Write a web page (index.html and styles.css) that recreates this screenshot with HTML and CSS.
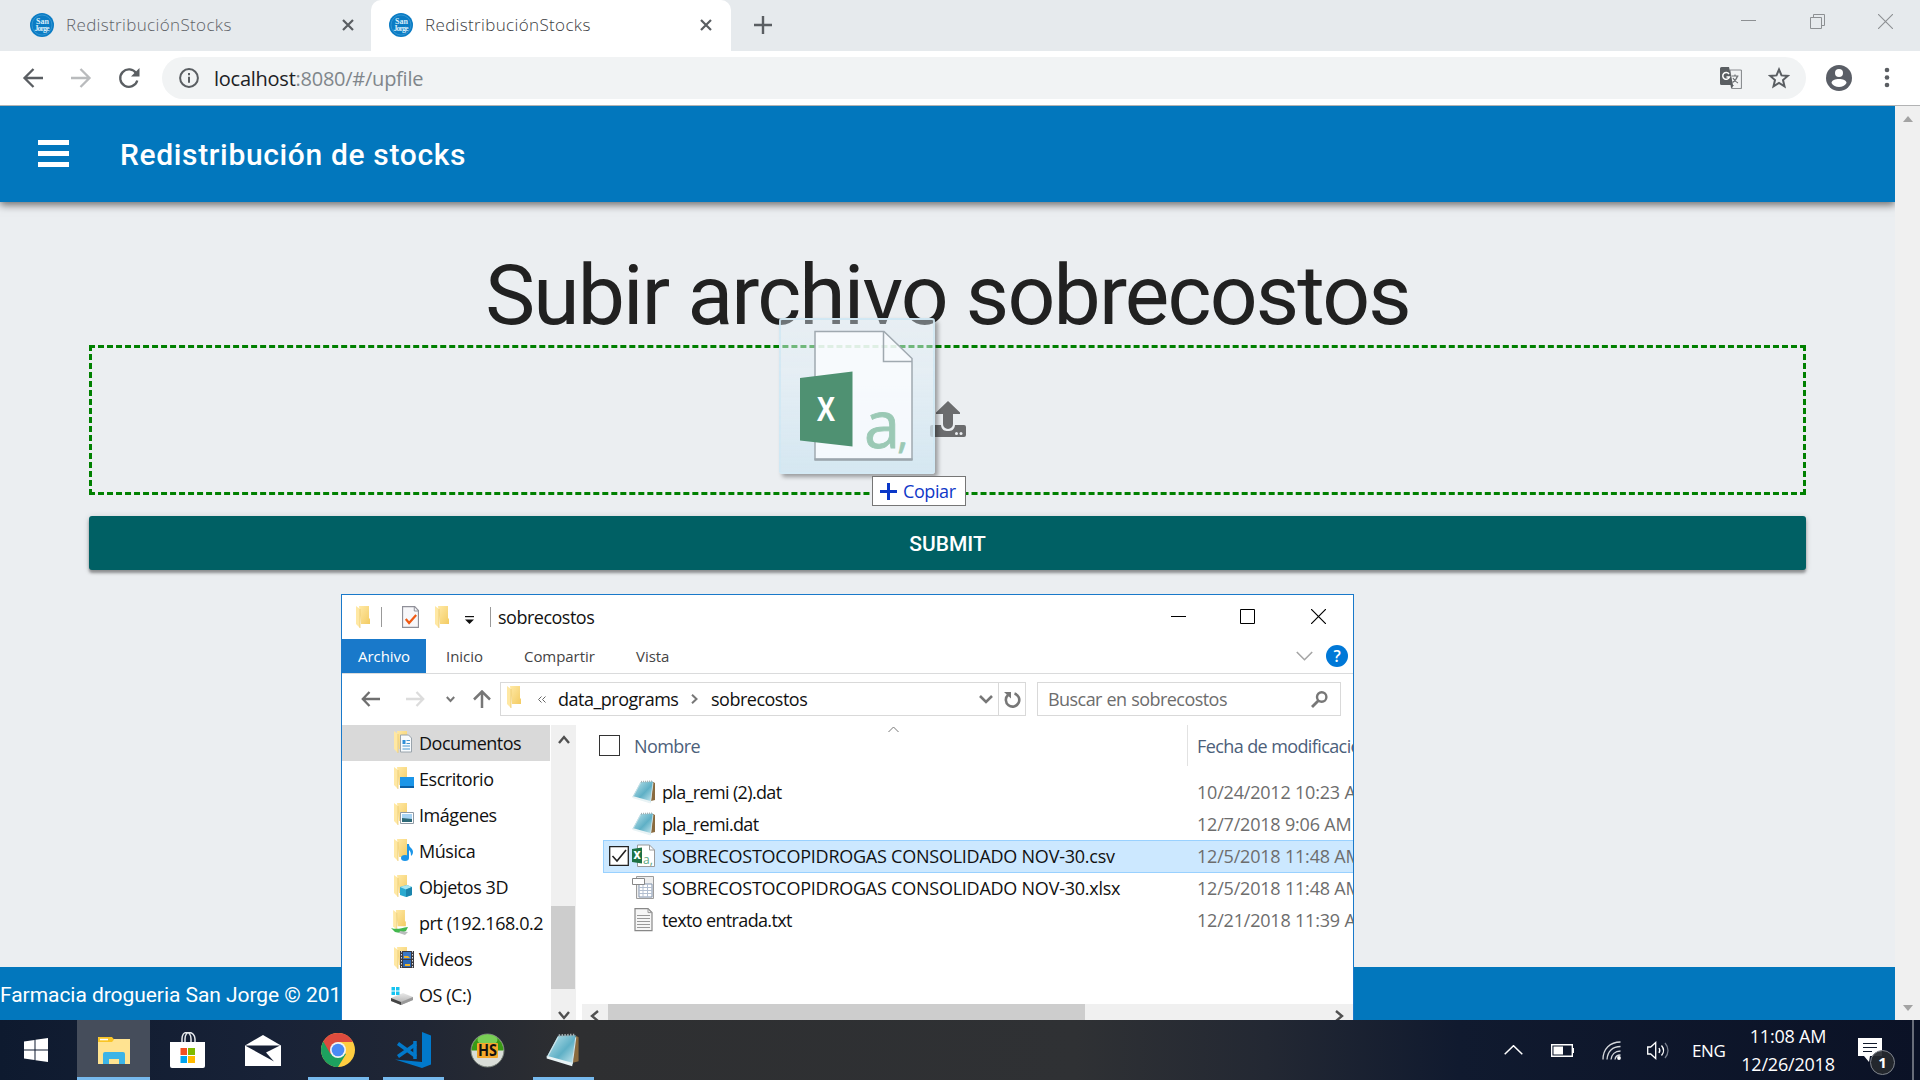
FILE: index.html
```html
<!DOCTYPE html>
<html lang="es">
<head>
<meta charset="utf-8">
<title>RedistribuciónStocks</title>
<link rel="stylesheet" href="styles.css">
</head>
<body>
<svg class="defs" width="0" height="0">
  <defs>
    <linearGradient id="gold" x1="0" y1="0" x2="1" y2="1"><stop offset="0" stop-color="#ffe9a6"/><stop offset="1" stop-color="#f3cb62"/></linearGradient>
    <linearGradient id="pad" x1="0" y1="0" x2="1" y2="1"><stop offset="0" stop-color="#c4e8ef"/><stop offset=".55" stop-color="#5fb0c6"/><stop offset="1" stop-color="#d5eef3"/></linearGradient>
    <linearGradient id="drive" x1="0" y1="0" x2="0" y2="1"><stop offset="0" stop-color="#e9e9e9"/><stop offset="1" stop-color="#a9a9a9"/></linearGradient>
    <symbol id="folder" viewBox="0 0 14 22"><path d="M3 0h10v12l1 1v5H5z" fill="url(#gold)"/><path d="M0 0l4 3v19l-4-4z" fill="#ffe8a3"/><path d="M4 3v19" stroke="#e6c469" stroke-width=".7"/></symbol>
    <symbol id="notepad" viewBox="0 0 24 24"><path d="M21 2l2 1v17l-4 1z" fill="#8a6a3e"/><path d="M8.500 2L21 1.500 18.500 23 .500 17z" fill="url(#pad)"/><path d="M.500 16l18 5v2.500L.500 18z" fill="#e9f3f5"/><path d="M9 1.800l12-.5" stroke="#a5b2b5" stroke-width="1.800" stroke-dasharray="1 1"/><path d="M8.500 3L1 17M21 3l-2.500 19" stroke="#cfe3e8" stroke-width=".8"/></symbol>
    <symbol id="logo" viewBox="0 0 24 24"><circle cx="12" cy="12" r="12" fill="#0b7cc4"/><circle cx="12" cy="12" r="10" fill="none" stroke="#3b9bd6" stroke-width=".8"/><text x="12.500" y="11" font-size="8" font-weight="700" text-anchor="middle" fill="#d8edf9" font-family="Liberation Serif, serif">San</text><text x="12" y="17.500" font-size="8" font-weight="700" text-anchor="middle" textLength="15" fill="#d8edf9" font-family="Liberation Serif, serif">Jorge</text></symbol>
    <symbol id="cross" viewBox="0 0 12 12"><path d="M1 1l10 10M11 1L1 11" stroke="#5a5e62" stroke-width="2.200"/></symbol>
  </defs>
</svg>

<header class="tabstrip">
  <div class="tab">
    <svg class="fav"><use href="#logo"/></svg><span class="tab-title">RedistribuciónStocks</span><svg class="tab-x"><use href="#cross"/></svg>
  </div>
  <div class="tab active">
    <svg class="fav"><use href="#logo"/></svg><span class="tab-title">RedistribuciónStocks</span><svg class="tab-x"><use href="#cross"/></svg>
  </div>
  <svg class="newtab" viewBox="0 0 18 18"><path d="M9 0v18M0 9h18" stroke="#5a5e62" stroke-width="2.400"/></svg>
  <div class="win-controls">
    <svg width="15" height="15" viewBox="0 0 15 15"><path d="M0 6.500h15" stroke="#8d9093"/></svg>
    <svg width="15" height="15" viewBox="0 0 15 15"><path d="M.5 3.500h11v11H.5zM3.500 3.500v-3h11v11h-3" fill="none" stroke="#8d9093"/></svg>
    <svg width="15" height="15" viewBox="0 0 15 15"><path d="M0 0l15 15M15 0L0 15" stroke="#8d9093" stroke-width="1.100"/></svg>
  </div>
</header>

<nav class="toolbar">
  <svg class="tb back" viewBox="0 0 20 20"><path d="M20 10H1.500M10.500 1L1.500 10l9 9" fill="none" stroke="#5a5e62" stroke-width="2.300"/></svg>
  <svg class="tb fwd" viewBox="0 0 20 20"><path d="M0 10h18.500M9.500 1l9 9-9 9" fill="none" stroke="#b9bbbd" stroke-width="2.300"/></svg>
  <svg class="tb rel" viewBox="0 0 20 20"><path d="M17.300 5.500A8.700 8.700 0 1 0 18.300 12.500" fill="none" stroke="#5a5e62" stroke-width="2.300"/><path d="M20.500 0v8.500H12z" fill="#5a5e62"/></svg>
  <div class="omnibox">
    <svg width="20" height="20" viewBox="0 0 20 20"><circle cx="10" cy="10" r="8.900" fill="none" stroke="#5a5e62" stroke-width="2"/><path d="M10 8.800v6M10 5v2.200" stroke="#5a5e62" stroke-width="2"/></svg>
    <span class="url"><b>localhost</b><span>:8080/#/upfile</span></span>
    <svg class="translate" width="22" height="22" viewBox="0 0 22 22"><path d="M10 3h10.500a1 1 0 0 1 1 1v16.500a1 1 0 0 1-1 1H12z" fill="#f1f3f4" stroke="#8b8e91" stroke-width="1.200"/><path d="M1.500 0H9l4 18H1.500A1.500 1.500 0 0 1 0 16.500v-15A1.500 1.500 0 0 1 1.500 0z" fill="#5a5e62"/><path d="M10.500 18H14l-2.800 3.500z" fill="#5a5e62"/><path d="M9 7a3.400 3.400 0 1 0 .4 3H6.500" fill="none" stroke="#fff" stroke-width="1.500"/><path d="M11.500 9h7M15 7.500V9M17.500 9c-.8 3-2.600 5-5 6.500M13 11c1 2 2.800 4 5 5" fill="none" stroke="#6f7275" stroke-width="1.200"/></svg>
    <svg class="star" width="22" height="22" viewBox="0 0 22 22"><path d="M11 2.500l2.500 5.900 6.300.5-4.800 4.200 1.500 6.200-5.500-3.300-5.500 3.300L7 13.100 2.200 8.900l6.300-.5z" fill="none" stroke="#5a5e62" stroke-width="2"/></svg>
  </div>
  <svg class="avatar" width="26" height="26" viewBox="0 0 26 26"><circle cx="13" cy="13" r="13" fill="#5a5e66"/><circle cx="13" cy="8" r="4" fill="#fff"/><path d="M5.500 18c0-2.600 3.800-4 7.500-4s7.500 1.400 7.500 4c-1.500 2.500-4.300 4-7.500 4s-6-1.500-7.500-4z" fill="#fff"/></svg>
  <svg class="kebab" width="6" height="22" viewBox="0 0 6 22"><g fill="#5a5e62"><circle cx="3" cy="3" r="2.300"/><circle cx="3" cy="10.500" r="2.300"/><circle cx="3" cy="18" r="2.300"/></g></svg>
</nav>

<div class="viewport">
  <div class="app">
    <div class="appbar">
      <svg width="32" height="27" viewBox="0 0 32 27"><path d="M0 2.500h31M0 13.500h31M0 24.500h31" stroke="#fff" stroke-width="4.800"/></svg>
      <span>Redistribución de stocks</span>
    </div>
    <main class="content">
      <h1>Subir archivo sobrecostos</h1>
      <div class="drop">
        <svg width="36" height="36" viewBox="0 0 36 36"><path d="M18 0l12 11.500v1.500h-7v10a5 5 0 0 1-10 0V13H6v-1.500z" fill="#6b6c6e"/><path d="M2 24h9c.5 5 3.500 6 7 6s6.500-1 7-6h9a2 2 0 0 1 2 2v8a2 2 0 0 1-2 2H2a2 2 0 0 1-2-2v-8a2 2 0 0 1 2-2z" fill="#6b6c6e"/><circle cx="26.500" cy="32.500" r="1.500" fill="#ebeef1"/><circle cx="31" cy="32.500" r="1.500" fill="#ebeef1"/></svg>
      </div>
      <button class="submit">SUBMIT</button>
    </main>
    <footer class="foot">Farmacia drogueria San Jorge © 2018</footer>
  </div>
  <div class="scroll"><i class="up"></i><i class="down"></i></div>
</div>

<footer class="taskbar">
  <div class="task start"><svg width="24" height="24" viewBox="0 0 24 24"><path d="M0 3.400l10.500-1.500v9.600H0zM11.500 1.700L24 0v11.500H11.500zM0 12.500h10.500v9.600L0 20.600zM11.500 12.500H24V24l-12.500-1.700z" fill="#fff"/></svg></div>
  <div class="task current"><svg width="32" height="27" viewBox="0 0 32 27"><path d="M0 0h13l2 2h17v25H0z" fill="#ffe391"/><path d="M0 1a1 1 0 0 1 1-1h13l2 2.500-2 2.500H0z" fill="#f9c526"/><path d="M2 1.800h8v1.500H2z" fill="#fff"/><path d="M5 17a2 2 0 0 1 2-2h18a2 2 0 0 1 2 2v12h-6v-7H11v7H5z" fill="#3cb4e7"/></svg></div>
  <div class="task"><svg width="36" height="36" viewBox="0 0 36 36"><path d="M12 11V7c0-4 2-6.500 4.500-6.500S21 3 21 7v4M15 11V7c0-4 2-6.500 4.500-6.500S25 3 25 7v4" fill="none" stroke="#e6e9ec" stroke-width="1.500"/><path d="M0 10h35v24a2 2 0 0 1-2 2H2a2 2 0 0 1-2-2z" fill="#fff"/><path d="M10.500 16h6.500v7h-6.500z" fill="#f25022"/><path d="M18 16h7v7h-7z" fill="#7fba00"/><path d="M10.500 24h6.500v7h-6.500z" fill="#00a4ef"/><path d="M18 24h7v7h-7z" fill="#ffb900"/></svg></div>
  <div class="task"><svg width="36" height="31" viewBox="0 0 36 31"><path d="M0 10.500L18 0l18 10.500V31H0z" fill="#fff"/><path d="M1 10.500h34L21 17.500l8 9L0 10.500z" fill="#182136"/></svg></div>
  <div class="task open"><svg width="34" height="34" viewBox="0 0 34 34"><circle cx="17" cy="17" r="17" fill="#ffcd40"/><path d="M17 17L2.300 8.500A17 17 0 0 0 17 34l8-13z" fill="#1da15f"/><path d="M17 9h15a17 17 0 0 0-29.700-.5L9.500 21z" fill="#dd4b3e"/><circle cx="17" cy="17" r="8" fill="#f3f3f3"/><circle cx="17" cy="17" r="6.300" fill="#4a8af4"/></svg></div>
  <div class="task open"><svg width="36" height="36" viewBox="0 0 36 36"><path d="M27 0l9 3.500v29L27 36 0 27.500l27 2.500z" fill="#0179cb"/><path d="M21 12L3 24.500M3 11.500l18 13" stroke="#0179cb" stroke-width="3.500" fill="none"/><path d="M20 9v18" stroke="#0179cb" stroke-width="3.500"/></svg></div>
  <div class="task"><svg width="35" height="35" viewBox="0 0 35 35"><circle cx="17.500" cy="17.500" r="16.500" fill="#d9ddd8" stroke="#788078"/><path d="M1.500 17.500a16 16 0 0 1 32 0z" fill="#3a9a16"/><ellipse cx="17.500" cy="7" rx="10" ry="5.500" fill="#79cf55"/><rect x="7" y="10" width="21" height="15" rx="1" fill="#f4a92b"/><text x="17.500" y="23" text-anchor="middle" font-size="15.500" font-weight="700" textLength="19" lengthAdjust="spacingAndGlyphs" font-family="Open Sans, sans-serif" fill="#111">HS</text></svg></div>
  <div class="task open"><svg width="34" height="34"><use href="#notepad"/></svg></div>
  <div class="tray">
    <svg class="t-up" width="19" height="10" viewBox="0 0 19 10"><path d="M.7 9.300l8.800-8.600 8.800 8.600" fill="none" stroke="#fff" stroke-width="1.500"/></svg>
    <svg class="t-bat" width="24" height="13" viewBox="0 0 24 13"><path d="M.7.700h20.600v11.600H.7z" fill="none" stroke="#fff" stroke-width="1.400"/><path d="M22 4h1v5h-1zM2.500 2.500h9.500v8H2.500z" fill="#fff"/></svg>
    <svg class="t-wifi" width="19" height="19" viewBox="0 0 19 19"><g fill="none" stroke="#d5d8dd" stroke-width="1.300"><path d="M1 18.500C1 8 8 1 18.500 1M5 18.500C5.500 10.500 10.500 5.500 18.500 5.500M9 18.500c.5-5 4-8.500 9.500-8.500M13 18.500c.3-2.500 2.500-4.500 5.500-4.500"/></g><circle cx="17" cy="17" r="1.900" fill="#fff"/></svg>
    <svg class="t-vol" width="23" height="19" viewBox="0 0 23 19"><path d="M.7 6v7h3l5 4.500v-16L3.700 6z" fill="none" stroke="#fff" stroke-width="1.300"/><path d="M12 7c1 1.500 1 3.500 0 5M14.500 4.500c2.500 3 2.500 7 0 10" fill="none" stroke="#fff" stroke-width="1.300"/><path d="M18 2c4 4.500 4 10.500 0 15" fill="none" stroke="#777e8c" stroke-width="1.300"/></svg>
    <span class="lang">ENG</span>
    <div class="clock"><span class="time">11:08 AM</span><span class="date">12/26/2018</span></div>
    <div class="notif"><svg width="24" height="24" viewBox="0 0 24 24"><path d="M0 0h24v18H12l-1 6-5-6H0z" fill="#fff"/><path d="M5 5.500h14M5 9.500h14M5 13.500h9" stroke="#111a2c" stroke-width="1.200"/></svg><b>1</b></div>
    <i class="peek"></i>
  </div>
</footer>

<section class="explorer">
  <div class="x-title">
    <svg class="x-f1" width="14" height="22"><use href="#folder"/></svg>
    <i class="vbar"></i>
    <svg class="x-prop" width="17" height="22" viewBox="0 0 18 22" preserveAspectRatio="none"><path d="M.6.600h12.900l3.900 4v16.800H.6z" fill="#f7f7fa" stroke="#8f8f98" stroke-width="1.200"/><path d="M13 .6v4.400h4.400" fill="none" stroke="#8f8f98"/><path d="M4 13l3.500 4L15 9" fill="none" stroke="#f05a14" stroke-width="2.400"/></svg>
    <svg class="x-f2" width="14" height="22"><use href="#folder"/></svg>
    <svg class="x-dd" width="9" height="8" viewBox="0 0 9 8"><path d="M0 .600h9" stroke="#111" stroke-width="1.200"/><path d="M0 3.500h9L4.500 8z" fill="#111"/></svg>
    <i class="vbar v2"></i>
    <span class="x-name">sobrecostos</span>
    <svg class="x-min" width="15" height="15" viewBox="0 0 15 15"><path d="M0 7.500h15" stroke="#000"/></svg>
    <svg class="x-max" width="15" height="15" viewBox="0 0 15 15"><path d="M.5.500h14v14H.5z" fill="none" stroke="#000"/></svg>
    <svg class="x-close" width="15" height="15" viewBox="0 0 15 15"><path d="M0 0l15 15M15 0L0 15" stroke="#000" stroke-width="1.200"/></svg>
  </div>
  <div class="x-ribbon">
    <span class="x-file">Archivo</span><span class="r1">Inicio</span><span class="r2">Compartir</span><span class="r3">Vista</span>
    <svg class="r-dd" width="17" height="10" viewBox="0 0 17 10"><path d="M.8 1l7.700 7.700L16.200 1" fill="none" stroke="#a5a5a5" stroke-width="1.600"/></svg>
    <b class="r-help">?</b>
  </div>
  <div class="x-addr">
    <svg class="a-back" width="19" height="16" viewBox="0 0 19 16"><path d="M19 8H2M8.500 1L1.800 8l6.700 7" fill="none" stroke="#6f6f6f" stroke-width="2.300"/></svg>
    <svg class="a-fwd" width="19" height="16" viewBox="0 0 19 16"><path d="M0 8h17M10.500 1l6.700 7-6.700 7" fill="none" stroke="#dcdcdc" stroke-width="2.300"/></svg>
    <svg class="a-dd" width="9" height="7" viewBox="0 0 9 7"><path d="M.8 1l3.700 4 3.700-4" fill="none" stroke="#777" stroke-width="2"/></svg>
    <svg class="a-up" width="18" height="18" viewBox="0 0 18 18"><path d="M9 18V2M1 9.500l8-8 8 8" fill="none" stroke="#777" stroke-width="2.500"/></svg>
    <div class="a-box">
      <svg width="14" height="22"><use href="#folder"/></svg>
      <svg class="a-ll" width="8" height="7" viewBox="0 0 8 7"><path d="M3.500.500l-3 3 3 3M7.500.500l-3 3 3 3" fill="none" stroke="#666"/></svg>
      <span class="a-p1">data_programs</span>
      <svg class="a-sep" width="7" height="10" viewBox="0 0 7 10"><path d="M1 .8L5.500 5 1 9.200" fill="none" stroke="#777" stroke-width="2"/></svg>
      <span class="a-p2">sobrecostos</span>
      <svg class="a-dd2" width="14" height="9" viewBox="0 0 14 9"><path d="M1 1l6 6 6-6" fill="none" stroke="#777" stroke-width="2.600"/></svg>
      <div class="a-ref"><svg width="17" height="17" viewBox="0 0 17 17"><path d="M10.500 2.500A6.700 6.700 0 1 1 4 4" fill="none" stroke="#777" stroke-width="2.600"/><path d="M0 1h7v6.500z" fill="#777"/></svg></div>
    </div>
    <div class="a-search"><span>Buscar en sobrecostos</span><svg width="17" height="17" viewBox="0 0 17 17"><circle cx="10.700" cy="6" r="4.700" fill="none" stroke="#777" stroke-width="2.400"/><path d="M7.500 9.500L1 16" stroke="#777" stroke-width="2.800"/></svg></div>
  </div>
  <div class="x-body">
    <ul class="tree">
      <li class="sel"><svg width="24" height="24" viewBox="0 0 24 24"><use href="#folder" width="14" height="22" x="2"/><path d="M8.500 4h8l3 3v14h-11z" fill="#f8fbfd" stroke="#9aa4ac"/><path d="M10.500 9h3v4h-3z" fill="#2f8fd8"/><path d="M14.500 9.500h3.500M14.500 12.500h3.500M10.500 15h7.500M10.500 18h7.500" stroke="#4a98cf"/></svg><span>Documentos</span></li>
      <li><svg width="24" height="24" viewBox="0 0 24 24"><use href="#folder" width="14" height="22" x="2"/><path d="M8 10h14v11H8z" fill="#1b95e8"/><path d="M8 19h14v2H8z" fill="#0b5fa5"/></svg><span>Escritorio</span></li>
      <li><svg width="24" height="24" viewBox="0 0 24 24"><use href="#folder" width="14" height="22" x="2"/><path d="M8.500 9.500h13v11h-13z" fill="#fff" stroke="#8f9aa5"/><path d="M10 11h10v5H10z" fill="#a6d2f2"/><path d="M10 15l10 1v3H10z" fill="#2e6a78"/></svg><span>Imágenes</span></li>
      <li><svg width="24" height="24" viewBox="0 0 24 24"><use href="#folder" width="14" height="22" x="2"/><ellipse cx="13" cy="19" rx="4" ry="3" fill="#1b95e8"/><path d="M15 5h2c0 4 4 4 4 8 0 2-1 3-2 4 0-4-1-5-2-6v8h-2z" fill="#1b95e8"/></svg><span>Música</span></li>
      <li><svg width="24" height="24" viewBox="0 0 24 24"><use href="#folder" width="14" height="22" x="2"/><path d="M8 12l7-2 5 2v8l-6 2-6-2z" fill="#2aaad0"/><path d="M8 12l7-2 5 2-6 2.500z" fill="#a7e6f3"/><path d="M14 14.500l6-2.500v8l-6 2z" fill="#1b85ad"/></svg><span>Objetos 3D</span></li>
      <li><svg width="24" height="24" viewBox="0 0 24 24"><use href="#folder" width="13" height="20" x="1" y="-1"/><path d="M-1 17c6 2 10 0 17-1l-2 4c-4 2-7 2-11 1z" fill="#43b84e"/><path d="M8 20l8 1-3 3-6-2z" fill="#b9bdbd"/></svg><span>prt (192.168.0.2</span></li>
      <li><svg width="24" height="24" viewBox="0 0 24 24"><use href="#folder" width="14" height="22" x="2"/><path d="M8 4h14v17H8z" fill="#3a3a40"/><path d="M11 5h8v7h-8z" fill="#3a78c4"/><path d="M11 13h8v7h-8z" fill="#2d68b4"/><path d="M12 9h4l2 2h-6zM13 17h5v2h-5z" fill="#f0b428"/><path d="M9.500 4v17M20.500 4v17" stroke="#ddd" stroke-dasharray="1.500 1.500"/></svg><span>Videos</span></li>
      <li><svg width="24" height="24" viewBox="0 0 24 24"><path d="M-1 15l12-5 10 4v3L9 22l-10-4z" fill="url(#drive)"/><path d="M-1 15l10 4v3l-10-4z" fill="#444"/><path d="M9 19l12-5v3L9 22z" fill="#999"/><path d="M-.5 4H3v3.500H-.5zM4 4h3.500v3.500H4zM-.5 8.500H3V12H-.5zM4 8.500h3.500V12H4z" fill="#16c3f0"/></svg><span>OS (C:)</span></li>
    </ul>
    <div class="v-scroll">
      <svg width="12" height="9" viewBox="0 0 12 9"><path d="M1 8l5-6 5 6" fill="none" stroke="#505050" stroke-width="2.400"/></svg>
      <i></i>
      <svg width="12" height="9" viewBox="0 0 12 9"><path d="M1 1l5 6 5-6" fill="none" stroke="#505050" stroke-width="2.400"/></svg>
    </div>
    <div class="files">
      <div class="f-head"><i class="chk"></i><span class="h-name">Nombre</span><svg class="h-sort" width="11" height="7" viewBox="0 0 11 7"><path d="M.5 6l5-5 5 5" fill="none" stroke="#777"/></svg><span class="h-date">Fecha de modificación</span></div>
      <div class="file"><svg class="ico" width="24" height="24"><use href="#notepad"/></svg><span class="fn">pla_remi (2).dat</span><span class="fd">10/24/2012 10:23 AM</span></div>
      <div class="file"><svg class="ico" width="24" height="24"><use href="#notepad"/></svg><span class="fn">pla_remi.dat</span><span class="fd">12/7/2018 9:06 AM</span></div>
      <div class="file on"><svg class="tick" width="20" height="20" viewBox="0 0 20 20"><path d="M.7.700h18.600v18.600H.7z" fill="#fff" stroke="#222" stroke-width="1.300"/><path d="M3.500 10l4.500 5 9-11" fill="none" stroke="#222" stroke-width="1.600"/></svg><svg class="ico" width="24" height="24" viewBox="0 0 24 24"><path d="M5.500 1h12l5 5v16.500h-17z" fill="#fff" stroke="#9a9a9a"/><path d="M17.500 1v5h5" fill="none" stroke="#9a9a9a"/><path d="M0 5l10-1.500v16L0 18z" fill="#1d7144"/><text x="5" y="15" text-anchor="middle" font-family="Open Sans, sans-serif" font-weight="800" font-size="10" fill="#fff">X</text><text x="16" y="19.500" text-anchor="middle" font-family="Open Sans, sans-serif" font-size="12" fill="#5aa87f">a,</text></svg><span class="fn caps">SOBRECOSTOCOPIDROGAS CONSOLIDADO NOV-30.csv</span><span class="fd">12/5/2018 11:48 AM</span></div>
      <div class="file"><svg class="ico" width="24" height="24" viewBox="0 0 24 24"><path d="M4.500.500h17v22h-17z" fill="#eee" stroke="#9c9c9c"/><path d="M7 8h13v13H7z" fill="#fff" stroke="#8193ad"/><path d="M7 11.500h13M7 14.500h13M7 17.500h13M11 8v13M15.500 8v13" stroke="#b3bfd0"/><path d="M.5 2.500h12v6H.5z" fill="#fff" stroke="#888"/></svg><span class="fn caps">SOBRECOSTOCOPIDROGAS CONSOLIDADO NOV-30.xlsx</span><span class="fd">12/5/2018 11:48 AM</span></div>
      <div class="file"><svg class="ico" width="24" height="24" viewBox="0 0 24 24"><path d="M3 .6h13l4 4v18H3z" fill="#f6f6f6" stroke="#888" stroke-width="1.200"/><path d="M16 .600v4h4M5 7.500h13M5 10.500h13M5 13.500h13M5 16.500h13M5 19.500h13" fill="none" stroke="#999"/></svg><span class="fn">texto entrada.txt</span><span class="fd">12/21/2018 11:39 AM</span></div>
      <div class="h-scroll"><svg width="9" height="12" viewBox="0 0 9 12"><path d="M8 1L2 6l6 5" fill="none" stroke="#505050" stroke-width="2.400"/></svg><i></i><svg width="9" height="12" viewBox="0 0 9 12"><path d="M1 1l6 5-6 5" fill="none" stroke="#505050" stroke-width="2.400"/></svg></div>
    </div>
  </div>
</section>

<div class="drag">
  <svg width="156" height="156" viewBox="0 0 156 156">
    <path d="M36 13.500h69l28 27v101H36z" fill="#fbfdff" fill-opacity=".8" stroke="#a0a9b0" stroke-width="1.500"/>
    <path d="M35.500 141.500h98" stroke="#9ba6ad" stroke-width="2.500"/>
    <path d="M104.500 13.500v30h28.500" fill="none" stroke="#a0a9b0" stroke-width="1.500"/>
    <path d="M21 60l52.500-6.500v75L21 122.500z" fill="#4f9172"/>
    <text x="47" y="103" text-anchor="middle" font-family="Open Sans, sans-serif" font-weight="700" font-size="34" textLength="18" lengthAdjust="spacingAndGlyphs" fill="#fff">X</text>
    <text x="85" y="129.500" font-family="Open Sans, sans-serif" font-size="65" font-weight="500" fill="#9bc9b5" stroke="#9bc9b5" stroke-width=".8">a<tspan font-size="42" dx="-3">,</tspan></text>
  </svg>
</div>
<div class="copy-tip"><svg width="17" height="17" viewBox="0 0 17 17"><path d="M8.500 0v17M0 8.500h17" stroke="#0a37c8" stroke-width="3"/></svg><span>Copiar</span></div>
</body>
</html>
```
FILE: styles.css
```css
* { box-sizing: border-box; }
body {
  margin: 0; width: 1920px; height: 1080px; overflow: hidden;
  display: flex; flex-direction: column; position: relative;
  font-family: "Open Sans", "Noto Sans", sans-serif; font-size: 18px;
  background: #ebeef1;
}
svg { display: block; flex: none; }
span { white-space: nowrap; }
i { font-style: normal; flex: none; }
.defs { position: absolute; }

/* browser tabs */
.tabstrip { height: 51px; flex: none; background: #e6eaed; display: flex; }
.tab { width: 371px; flex: none; padding: 0 17px 2px 30px; display: flex; align-items: center; }
.tab.active { width: 360px; background: #fff; border-radius: 10px 10px 0 0; padding: 0 19px 2px 18px; }
.fav { width: 24px; height: 24px; }
.tab-title { margin-left: 12px; flex: 1; font-size: 17px; letter-spacing: .35px; color: #5f6368; font-weight: 300; }
.tab.active .tab-title { color: #3c4043; }
.tab-x { width: 12px; height: 12px; }
.newtab { width: 18px; height: 18px; margin: 16px 0 0 23px; }
.win-controls { margin: 14px 27px 0 auto; display: flex; gap: 53.500px; }

/* address bar */
.toolbar { height: 55px; flex: none; background: #fff; border-bottom: 1px solid #b2b3b4; display: flex; align-items: center; padding-left: 23px; }
.tb { width: 20px; height: 20px; margin-right: 28px; overflow: visible; }
.tb.rel { margin-right: 23px; }
.omnibox { width: 1644px; height: 42px; border-radius: 21px; background: #f1f3f4; display: flex; align-items: center; padding-left: 17px; }
.url { margin-left: 15px; flex: 1; font-size: 20px; letter-spacing: -.25px; color: #80868b; }
.url b { font-weight: 400; color: #202124; }
.translate { margin-right: 26px; }
.star { margin-right: 16px; }
.avatar { margin-left: 20px; }
.kebab { margin-left: 32px; }

/* web page */
.viewport { height: 914px; flex: none; display: flex; }
.app { width: 1895px; display: flex; flex-direction: column; overflow: hidden; background: #ebeef1; }
.appbar { height: 96px; flex: none; background: #0277bd; box-shadow: 0 3px 8px rgba(0,0,0,.55); display: flex; align-items: center; padding-left: 38px; gap: 50px; color: #fff; font: 500 30px Roboto, sans-serif; letter-spacing: .65px; }
.appbar svg { margin-top: -1px; }
.content { flex: 1; padding: 41px 89px 0; display: flex; flex-direction: column; }
h1 { margin: 0; height: 102px; text-align: center; font: 400 84px/105px Roboto, sans-serif; letter-spacing: -1.800px; color: #212121; white-space: nowrap; }
.drop { height: 150px; border: 3px dashed green; display: flex; align-items: center; justify-content: center; padding-bottom: 2px; }
.submit { margin-top: 21px; height: 54px; border: 0; border-radius: 3px; background: #006064; color: #fff; font: 500 21px Roboto, sans-serif; padding: 2px 0 0; box-shadow: 0 3px 3px rgba(0,0,0,.35), 0 1px 6px rgba(0,0,0,.15); }
.foot { height: 53px; flex: none; background: #0277bd; color: #fff; font: 400 21px/56px Roboto, sans-serif; letter-spacing: -.05px; white-space: nowrap; }
.scroll { width: 25px; background: #f0f0f0; display: flex; flex-direction: column; justify-content: space-between; align-items: center; padding: 10px 0 9px; }
.scroll i { border: 5.500px solid transparent; }
.scroll .up { border-bottom: 6px solid #a3a3a3; border-top: 0; }
.scroll .down { border-top: 6px solid #a3a3a3; border-bottom: 0; }

/* taskbar */
.taskbar { height: 60px; flex: none; display: flex; background: linear-gradient(90deg, #0e1a2f 0, #182237 14%, #202634 22%, #2e2f31 30%, #2f3134 56%, #232833 66%, #101a2f 76%, #0b1226 100%); }
.task { width: 75px; display: flex; align-items: center; justify-content: center; }
.task.start { width: 77px; padding-right: 5px; }
.task.current { width: 73px; background: #454d5b; border-bottom: 3px solid #76b9ed; padding-top: 3px; }
.task.open { background: linear-gradient(#76b9ed, #76b9ed) 8px 100% / 61px 3px no-repeat; }
.tray { margin-left: auto; display: flex; align-items: center; color: #fff; font-size: 17px; }
.t-bat { margin-left: 28px; }
.t-wifi { margin-left: 27px; }
.t-vol { margin-left: 26px; }
.lang { margin-left: 22px; width: 36px; letter-spacing: -.4px; }
.clock { width: 96px; margin-left: 12px; text-align: center; display: flex; flex-direction: column; line-height: 28px; font-size: 18px; }
.time, .date { letter-spacing: -.2px; }
.notif { position: relative; margin-left: 22px; width: 24px; height: 24px; }
.notif b { position: absolute; left: 12px; top: 12px; width: 25px; height: 25px; border: 1.500px solid #80858d; border-radius: 50%; background: rgba(38,41,46,.93); font-size: 15px; line-height: 22px; text-align: center; }
.peek { width: 2px; height: 60px; background: #686d79; margin: 0 6px 0 30px; }

/* file explorer window */
.explorer { position: absolute; left: 341px; top: 594px; width: 1013px; height: 426px; background: #fff; border: 1px solid #1979ca; border-bottom: 0; overflow: hidden; display: flex; flex-direction: column; color: #111; }
.x-title { height: 44px; flex: none; display: flex; align-items: center; padding-left: 14px; }
.x-f1 { margin-right: 11px; }
.vbar { width: 1px; height: 20px; background: #999; margin-right: 20px; }
.x-prop { margin-right: 16px; }
.x-f2 { margin-right: 16px; }
.x-dd { margin: 6px 16px 0 0; }
.v2 { margin-right: 7px; }
.x-name { letter-spacing: -.5px; }
.x-min { margin: 0 0 2px auto; }
.x-max { margin: 0 0 2px 54px; }
.x-close { margin: 0 27px 2px 56px; }
.x-ribbon { height: 35px; flex: none; border-bottom: 1px solid #dadbdc; display: flex; align-items: center; font-size: 15px; color: #444; letter-spacing: -.05px; }
.x-file { width: 84px; height: 34px; line-height: 34px; text-align: center; color: #fff; background: #1979ca; }
.r1 { margin-left: 20px; width: 78px; }
.r2 { width: 112px; }
.r-dd { margin-left: auto; }
.r-help { width: 22px; height: 22px; margin: 0 5px 0 13px; border-radius: 50%; background: #0078d7; color: #fff; line-height: 22px; text-align: center; font-size: 16px; font-weight: 600; }
.x-addr { height: 51px; flex: none; display: flex; align-items: center; padding: 0 0 1px 19px; }
.a-fwd { margin-left: 26px; }
.a-dd { margin-left: 21px; }
.a-up { margin: 0 9px 0 18px; }
.a-box { width: 526px; height: 34px; border: 1px solid #d9d9d9; display: flex; align-items: center; padding-left: 6px; }
.a-box > svg:first-child { margin-top: -4px; }
.a-ll { margin-left: 17px; }
.a-p1 { margin-left: 12px; width: 123px; letter-spacing: -.5px; }
.a-sep { margin: 0 13px 0 10px; }
.a-p2 { letter-spacing: -.5px; }
.a-dd2 { margin: 0 5px 0 auto; }
.a-ref { width: 27px; height: 32px; border-left: 1px solid #d9d9d9; display: flex; align-items: center; justify-content: center; }
.a-search { width: 304px; height: 34px; margin-left: 11px; border: 1px solid #d9d9d9; display: flex; align-items: center; justify-content: space-between; padding: 0 12px 0 10px; color: #6d6d6d; }
.a-search span { letter-spacing: -.55px; font-size: 18px; word-spacing: .5px; }
.x-body { flex: 1; display: flex; min-height: 0; }
.tree { list-style: none; margin: 0; padding: 0; width: 208px; flex: none; }
.tree li { height: 36px; display: flex; align-items: center; padding-left: 50px; gap: 3px; letter-spacing: -.45px; }
.tree li svg { overflow: visible; }
.tree .sel { background: #d9d9d9; letter-spacing: -.5px; }
.v-scroll { width: 25px; height: 306px; flex: none; margin-left: 1px; background: #f0f0f0; display: flex; flex-direction: column; align-items: center; padding-top: 10px; }
.v-scroll i { width: 24px; height: 83px; margin: 162px 1px 22px 0; background: #cdcdcd; }
.files { flex: 1; min-width: 0; margin-left: 6px; display: flex; flex-direction: column; overflow: hidden; }
.f-head { height: 41px; flex: none; margin-bottom: 10px; display: flex; align-items: center; color: #4c607a; }
.chk { width: 21px; height: 21px; border: 1.500px solid #333; margin-left: 17px; }
.h-name { width: 253px; flex: none; margin-left: 14px; letter-spacing: -.6px; }
.h-sort { align-self: flex-start; margin: 1px 288px 0 1px; }
.h-date { flex: none; align-self: stretch; line-height: 42px; border-left: 1px solid #e2e2e2; padding-left: 9px; letter-spacing: -.6px; }
.file { height: 32px; flex: none; margin-left: 21px; display: flex; align-items: center; padding-left: 29px; }
.file.on { height: 33px; margin-bottom: -1px; background: #cce8ff; border: 1px solid #99d1ff; border-right: 0; padding: 0 0 1px 5px; }
.tick { margin-right: 3px; }
.ico { margin-right: 6px; }
.fn { width: 535px; flex: none; letter-spacing: -.65px; }
.caps { letter-spacing: -.24px; }
.fd { color: #6d6d6d; letter-spacing: -.2px; }
.h-scroll { height: 24px; flex: none; margin-top: 68px; background: #f0f0f0; display: flex; align-items: center; padding-left: 8px; }
.h-scroll i { width: 477px; height: 24px; background: #cdcdcd; margin: 0 auto 0 9px; }
.h-scroll svg:last-child { margin-right: 9px; }

/* dragged file preview and its tooltip */
.drag { position: absolute; left: 779px; top: 318px; width: 156px; height: 156px; border: 2px solid rgba(208,232,243,.85); border-radius: 3px; background: linear-gradient(rgba(225,238,246,.4), rgba(225,238,246,.6) 35%, rgba(210,230,241,.88)); box-shadow: 3px 3px 4px rgba(0,0,0,.35); }
.drag svg { margin: -2px; }
.copy-tip { position: absolute; left: 872px; top: 476px; width: 94px; height: 30px; background: #fff; border: 1px solid #767676; display: flex; align-items: center; padding-left: 7px; gap: 6px; color: #1038c8; letter-spacing: -.4px; }
```
